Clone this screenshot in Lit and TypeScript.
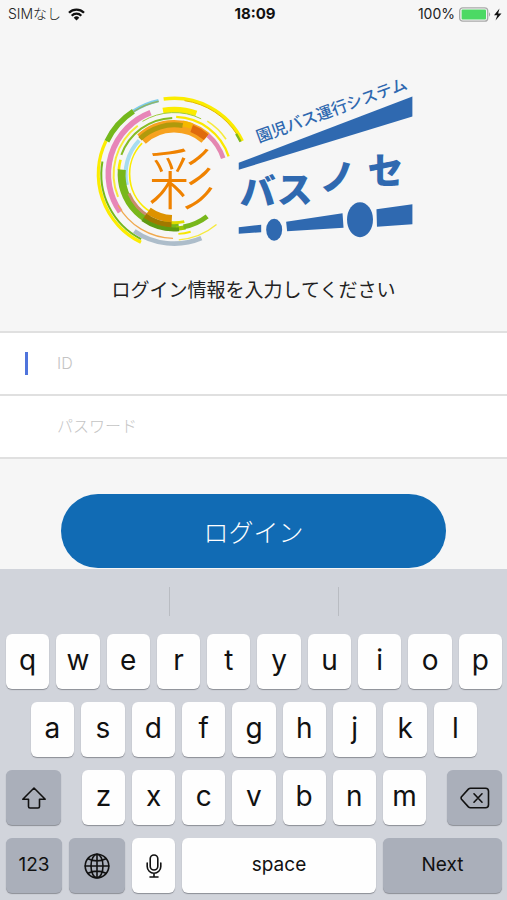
import { LitElement, html, svg, css } from "lit";
import { customElement } from "lit/decorators.js";

type Arc = [radius: number, width: number, start: number, end: number, color: string];

// Rings of the emblem: angles in degrees, clockwise from the right-hand side.
const ARCS: Arc[] = [
  [228, 10, -98, -26, "#fbec00"],
  [223, 3, -82, -32, "#e3b800"],
  [222, 7, -33, -26, "#7fb51a"],
  [226, 10, -123, -102, "#7fcdec"],
  [224, 5, -123, -102, "#8fb56a"],
  [225, 16, -154, -123, "#74b81c"],
  [228, 10, -244, -154, "#fbec00"],
  [219, 6, -243, -170, "#74b81c"],
  [198, 17, -215, -111, "#e785b8"],
  [194, 17, -100, -70, "#fbec00"],
  [185, 3, -121, -64, "#9fca3c"],
  [188, 5, -58, -34, "#f6ea3c"],
  [182, 6, -202, -127, "#f7ec3a"],
  [193, 4, 91, 151, "#f0a94e"],
  [169, 6, -160, -92, "#86bc25"],
  [172, 7, -88, -18, "#fbe800"],
  [167, 8, -176, -165, "#fbec00"],
  [146, 12, -193, -136, "#a6dcf0"],
  [134, 5, -238, -136, "#fbec00"],
  [158, 24, 85, 185, "#78b71b"],
  [148, 9, 120, 157, "#c98c6c"],
  [146, 9, 78, 103, "#dfdc00"],
  [164, 13, 78, 88, "#9bc800"],
  [161, 15, 52, 80, "#78b71b"],
  [144, 38, -133, -49, "#f7a21f"],
  [148, 15, -134, -80, "#b09a0c"],
  [154, 18, -80, -70, "#f5b800"],
  [147, 22, -69, -49, "#df6a0c"],
  [155, 14, -49, -18, "#e487b0"],
  [134, 22, 93, 125, "#dd9200"],
  [153, 16, 93, 125, "#a07800"],
  [166, 12, 85, 125, "#5f9a12"],
  [198, 4, 50, 86, "#f6ea3c"],
  [180, 6, 74, 86, "#f7e600"],
  [209, 14, 67, 125, "#adbdca"],
];

const arcPath = (r: number, a0: number, a1: number) => {
  const point = (a: number) => {
    const t = (a * Math.PI) / 180;
    return `${(265 + r * Math.cos(t)).toFixed(1)} ${(265 + r * Math.sin(t)).toFixed(1)}`;
  };
  return `M${point(a0)}A${r} ${r} 0 ${a1 - a0 > 180 ? 1 : 0} 1 ${point(a1)}`;
};

@customElement("brand-logo")
class BrandLogo extends LitElement {
  static styles = css`
    :host { display: block; }
    .logo { display: block; width: 100%; }
    .kanji { font: 300 67px "Noto Sans CJK JP", sans-serif; fill: #ef8200; }
    .tagline { font: 500 16px "Noto Sans CJK JP", sans-serif; fill: #2f69b0; }
    .name { font: 900 36px "Noto Sans CJK JP", sans-serif; fill: #2f69b0; }
    .solid { fill: #2f69b0; }
  `;
  render() {
    return html`<svg class="logo" viewBox="93 70 320 180" role="img" aria-label="彩 園児バス運行システム バスノセ">
      <g transform="translate(85 85) scale(.3333)" fill="none">
        ${ARCS.map(([r, w, a0, a1, c]) => svg`<path d=${arcPath(r, a0, a1)} stroke=${c} stroke-width=${w} />`)}
      </g>
      <text class="kanji" x="147" y="203">彩</text>
      <text class="tagline" transform="translate(258 142) rotate(-20)">園児バス運行システム</text>
      <path class="solid" d="M238 162L412 95.500V115.500L238 169Z" />
      <text class="name" x="239 276 319 367" y="204 202 190 183">バスノセ</text>
      <path class="solid" d="M238 226.500L260.500 224V231.500L238 233Z M285.500 221L342 212.500L343 227L286.500 230.500Z M376 208.500L412 203.500V223.500L376.500 226Z" />
      <ellipse class="solid" cx="273.500" cy="229" rx="8" ry="11" />
      <ellipse class="solid" cx="359.500" cy="219" rx="13" ry="17.500" />
    </svg>`;
  }
}

@customElement("status-bar")
class StatusBar extends LitElement {
  static styles = css`
    :host {
      display: grid;
      grid-template-columns: 1fr auto 1fr;
      align-items: center;
      height: 28px;
      padding: 0 5px 0 8px;
      font: 14px/20px Inter, "Noto Sans CJK JP", sans-serif;
      color: #222;
    }
    .side { display: flex; align-items: center; gap: 7px; }
    .end { justify-content: flex-end; gap: 4px; }
    .time { font-size: 15px; font-weight: 700; color: #111; }
    .carrier { font-weight: 300; }
    svg { display: block; }
  `;
  render() {
    return html`
      <div class="side">
        <span class="carrier">SIMなし</span>
        <svg width="17" height="13" viewBox="0 0 17 13" fill="none" stroke="#111" stroke-width="2.300">
          <path d="M1 4.700a10.600 10.600 0 0 1 15 0M3.700 7.700a6.800 6.800 0 0 1 9.600 0" />
          <path d="M8.500 12.500L5.700 9.700a4 4 0 0 1 5.600 0Z" fill="#111" stroke="none" />
        </svg>
      </div>
      <span class="time">18:09</span>
      <div class="side end">
        <span>100%</span>
        <svg width="43" height="15" viewBox="0 0 43 15">
          <rect x=".7" y=".8" width="28" height="13.400" rx="3" fill="#f6f6f6" stroke="#a9a9a9" stroke-width="1.300" />
          <rect x="2.600" y="2.600" width="24.400" height="9.800" rx="1" fill="#4cd964" />
          <path d="M30 5.300q2.400 2.200 0 4.400Z" fill="#a9a9a9" />
          <path d="M40.500 1.500L35 8.300h3.300L36.500 13.500L42.500 6.500h-3.400Z" fill="#111" />
        </svg>
      </div>`;
  }
}

@customElement("touch-keyboard")
class TouchKeyboard extends LitElement {
  static styles = css`
    :host {
      display: flex;
      flex-direction: column;
      gap: 13px;
      padding: 0 5px 7px 6px;
      background: #d1d4db;
      font-family: Inter, sans-serif;
    }
    .suggestions {
      display: grid;
      grid-template-columns: 1fr 1fr 1fr;
      height: 29px;
      margin: 18px -5px 5px -6px;
    }
    .suggestions span + span { border-left: 1px solid #b9bcc2; }
    .row { display: flex; gap: 7px; }
    .inset { padding: 0 5%; }
    .letters { display: flex; gap: 7px; flex: 344 1 0; margin: 0 14px; }
    .key {
      flex: 43 1 0;
      min-width: 0;
      height: 55px;
      display: flex;
      align-items: center;
      justify-content: center;
      margin: 0;
      padding: 0 0 4px;
      border: 0;
      border-radius: 6px;
      background: #fefefe;
      box-shadow: 0 1px 1px #8b8e95;
      color: #111;
      font: 400 28px/32px Inter, sans-serif;
    }
    .dark { background: #aaafba; }
    .word { padding: 0 0 2px; font-size: 19px; line-height: 24px; }
    .icon { padding: 0; }
    .shift { flex-grow: 55; }
    .mode { flex-grow: 56; }
    .space { flex-grow: 194; }
    .next { flex-grow: 119; }
    svg { display: block; fill: none; stroke: #111; stroke-width: 1.600; stroke-linejoin: round; stroke-linecap: round; }
  `;
  private keys(letters: string) {
    return [...letters].map((l) => html`<button class="key" type="button">${l}</button>`);
  }
  render() {
    return html`
      <div class="suggestions"><span></span><span></span><span></span></div>
      <div class="row">${this.keys("qwertyuiop")}</div>
      <div class="row inset">${this.keys("asdfghjkl")}</div>
      <div class="row">
        <button class="key dark icon shift" type="button" aria-label="Shift">
          <svg width="26" height="24" viewBox="0 0 26 24"><path d="M13 2L1.800 13.200H7.500V20.500Q7.500 22 9 22H17Q18.500 22 18.500 20.500V13.200H24.200Z" /></svg>
        </button>
        <div class="letters">${this.keys("zxcvbnm")}</div>
        <button class="key dark icon shift" type="button" aria-label="Delete">
          <svg width="30" height="22" viewBox="0 0 30 22"><path d="M10.500 1.200H25.500Q28.500 1.200 28.500 4.200V17.800Q28.500 20.800 25.500 20.800H10.500Q9.300 20.800 8.400 19.900L1.500 12.200Q.7 11 1.500 9.800L8.400 2.100Q9.300 1.200 10.500 1.200ZM14 6.800L22 15.200M22 6.800L14 15.200" /></svg>
        </button>
      </div>
      <div class="row">
        <button class="key dark word mode" type="button">123</button>
        <button class="key dark icon mode" type="button" aria-label="Next keyboard">
          <svg width="26" height="26" viewBox="0 0 26 26"><circle cx="13" cy="13" r="11.800" /><ellipse cx="13" cy="13" rx="6" ry="11.800" /><path d="M13 1.200V24.800M1.200 13H24.800M4 5.700Q13 10 22 5.700M4 20.300Q13 16 22 20.300" /></svg>
        </button>
        <button class="key icon" type="button" aria-label="Dictate">
          <svg width="16" height="24" viewBox="0 0 16 24"><rect x="4.200" y="1" width="7.600" height="15" rx="3.800" /><path d="M1.200 9V12.500A6.800 6.800 0 0 0 14.800 12.500V9M8 19.400V23M4 23H12" /></svg>
        </button>
        <button class="key word space" type="button">space</button>
        <button class="key dark word next" type="button">Next</button>
      </div>`;
  }
}

@customElement("app-root")
class AppRoot extends LitElement {
  static styles = css`
    :host {
      display: flex;
      flex-direction: column;
      min-height: 100vh;
      background: #f6f6f6;
      font-family: "Noto Sans CJK JP", sans-serif;
    }
    .logo { width: 63%; margin: 43px auto 0; }
    .prompt {
      margin: 24px 0 28px;
      text-align: center;
      font-size: 19px;
      line-height: 28px;
      font-weight: 400;
      color: #222;
    }
    .fields { border-top: 2px solid #e0e0e0; }
    .field {
      display: flex;
      align-items: center;
      height: 61px;
      padding-left: 25px;
      background: #fff;
      border-bottom: 2px solid #e0e0e0;
    }
    .caret { width: 3px; height: 23px; margin-right: 29px; }
    .active { background: #4f74dc; }
    .input {
      flex: 1;
      min-width: 0;
      padding: 0;
      border: 0;
      outline: 0;
      background: none;
      font: 16px/24px Inter, "Noto Sans CJK JP", sans-serif;
      font-weight: 300;
      color: #222;
    }
    .input::placeholder { color: #c4c4c4; opacity: 1; }
    .login {
      display: block;
      width: 76%;
      height: 74px;
      margin: 35px auto 1px;
      padding: 0;
      border: 0;
      border-radius: 37px;
      background: #116bb4;
      color: #fff;
      font: 300 25px/36px "Noto Sans CJK JP", sans-serif;
    }
    .keyboard { margin-top: auto; }
  `;
  render() {
    return html`
      <status-bar></status-bar>
      <brand-logo class="logo"></brand-logo>
      <h1 class="prompt">ログイン情報を入力してください</h1>
      <form>
        <div class="fields">
          <div class="field">
            <span class="caret active"></span>
            <input class="input" type="text" placeholder="ID" aria-label="ID" />
          </div>
          <div class="field">
            <span class="caret"></span>
            <input class="input" type="password" placeholder="パスワード" aria-label="パスワード" />
          </div>
        </div>
        <button class="login" type="button">ログイン</button>
      </form>
      <touch-keyboard class="keyboard"></touch-keyboard>`;
  }
}
